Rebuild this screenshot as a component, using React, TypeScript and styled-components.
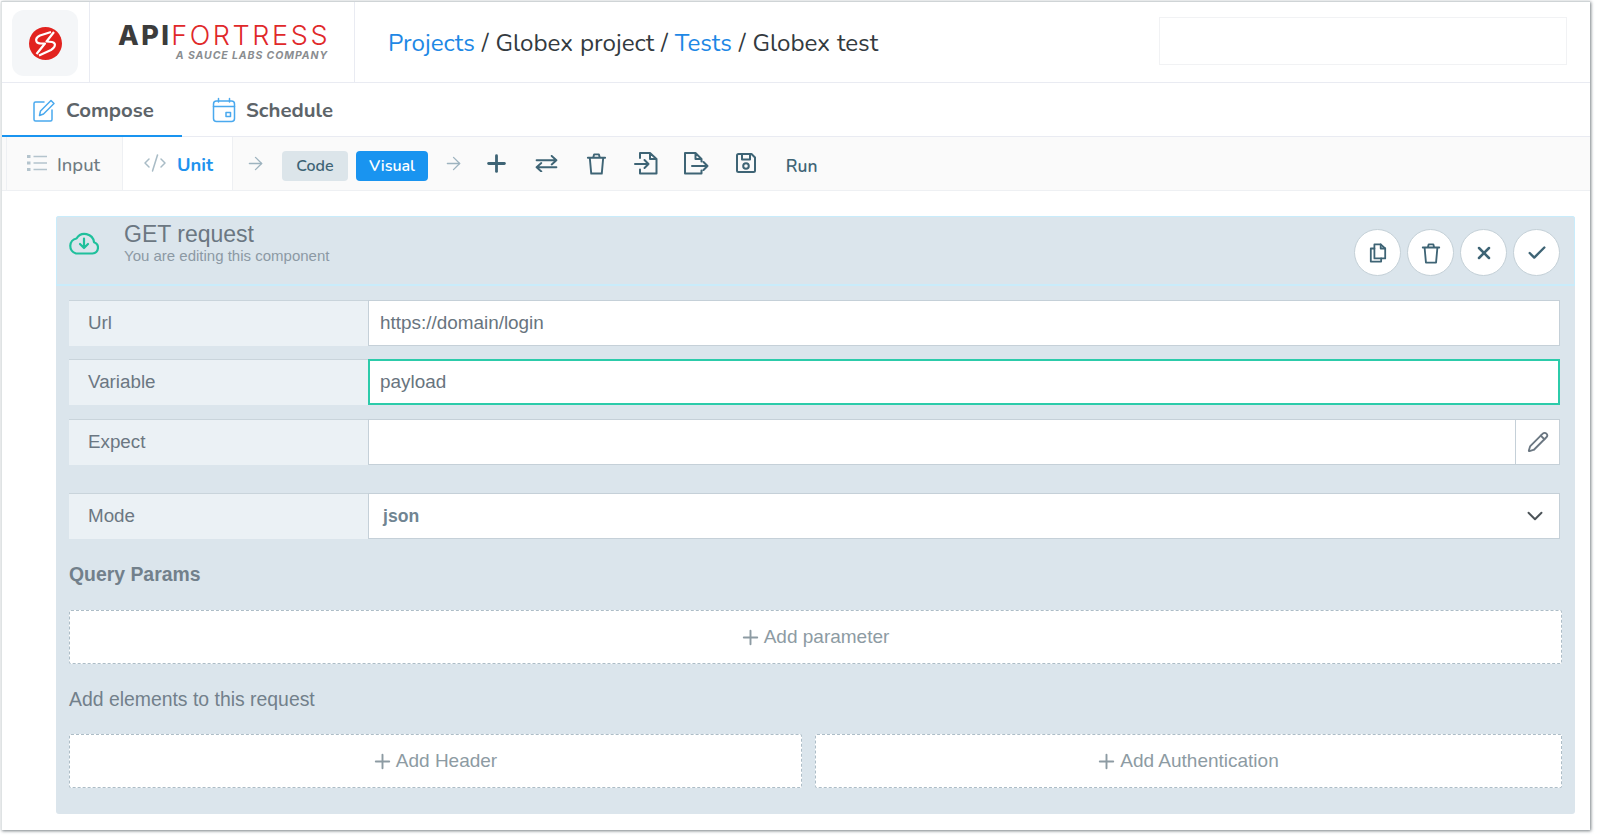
import { ReactNode } from "react";
import styled, { createGlobalStyle } from "styled-components";
import { ArrowRight, Check, ChevronDown, CodeXml, Pencil, Plus, X } from "lucide-react";

const GlobalStyle = createGlobalStyle`
  html, body {
    margin: 0;
    padding: 0;
    min-height: 100vh;
    background: #fff;
  }
  * {
    box-sizing: border-box;
  }
`;

const uiFont = `"Nunito", "Lato", "Open Sans", sans-serif`;
const formFont = `"Liberation Sans", Arial, sans-serif`;

const Page = styled.div`
  width: 1598px;
  height: 838px;
  padding: 1px 0 0 1px;
  overflow: hidden;
`;

const Frame = styled.div`
  width: 1589px;
  height: 829px;
  background: #fff;
  border-top: 1px solid #cfd4d6;
  border-left: 1px solid #dfe3e4;
  box-shadow: 1px 1px 3px rgba(95, 105, 110, 0.85);
  font-family: ${uiFont};
  overflow: hidden;
`;

const Header = styled.header`
  display: flex;
  align-items: stretch;
  height: 81px;
  border-bottom: 1px solid #e9ebf2;
`;

const IconCell = styled.div`
  width: 88px;
  padding: 8px 0 0 10px;
  border-right: 1px solid #e9ebf2;
`;

const IconTile = styled.div`
  display: flex;
  align-items: center;
  justify-content: center;
  width: 66px;
  height: 66px;
  border-radius: 12px;
  background: #f4f6f8;
`;

const LogoCell = styled.div`
  display: flex;
  flex-direction: column;
  width: 265px;
  padding: 20px 0 0 28px;
  border-right: 1px solid #e9ebf2;
`;

const LogoWord = styled.div`
  font-family: "Inter", sans-serif;
  font-size: 27px;
  line-height: 27px;
  white-space: nowrap;
`;

const LogoStrong = styled.span`
  font-weight: 800;
  letter-spacing: 2.4px;
  color: #3c3c3c;
`;

const LogoLight = styled.span`
  font-weight: 300;
  letter-spacing: 2.6px;
  color: #e0282a;
`;

const LogoSub = styled.div`
  font-family: "Inter", sans-serif;
  font-size: 10.5px;
  line-height: 12px;
  margin-top: 1px;
  width: 210px;
  text-align: right;
  font-weight: 700;
  font-style: italic;
  letter-spacing: 0.9px;
  color: #8a8d90;
  white-space: nowrap;
`;

const Breadcrumb = styled.nav`
  display: flex;
  align-items: center;
  flex: 1;
  padding: 2px 0 0 33px;
  font-size: 24.2px;
  word-spacing: 0.6px;
  color: #333a40;
  white-space: pre;
`;

const Crumb = styled.span`
  color: #1e88e5;
`;

const SearchBox = styled.div`
  align-self: flex-start;
  width: 408px;
  height: 48px;
  margin: 15px 23px 0 0;
  border: 1px solid #f1f2f4;
`;

const Tabs = styled.div`
  display: flex;
  height: 54px;
  border-bottom: 1px solid #e9ebf2;
`;

const Tab = styled.div<{ $active?: boolean; $width: number }>`
  display: flex;
  align-items: center;
  gap: 9px;
  width: ${(p) => p.$width}px;
  padding: 1px 0 0 29px;
  margin-bottom: -1px;
  border-bottom: 2px solid ${(p) => (p.$active ? "#1994f0" : "transparent")};
  font-size: 20.4px;
  font-weight: 700;
  color: #5d6469;
`;

const TabIcon = styled.svg`
  width: 26px;
  height: 26px;
  fill: none;
  stroke: #4aa9ee;
  stroke-width: 1.5;
  stroke-linecap: round;
  stroke-linejoin: round;
  flex-shrink: 0;
`;

const Toolbar = styled.div`
  display: flex;
  align-items: center;
  height: 54px;
  padding-left: 4px;
  background: #fafafa;
  border-bottom: 1px solid #eef0f3;
`;

const SideTab = styled.div<{ $active?: boolean; $width: number }>`
  display: flex;
  align-items: center;
  gap: 10px;
  height: 100%;
  width: ${(p) => p.$width}px;
  padding: 2px 0 0 20px;
  background: ${(p) => (p.$active ? "#fff" : "transparent")};
  border-left: 1px solid #eef0f3;
  border-right: ${(p) => (p.$active ? "1px solid #eef0f3" : "none")};
  font-size: 18.4px;
  font-weight: ${(p) => (p.$active ? 700 : 500)};
  color: ${(p) => (p.$active ? "#1e93ee" : "#6f7a82")};
  svg {
    color: #a9bcc6;
    margin-top: -3px;
  }
`;

const ToolArrow = styled.span<{ $gapLeft: number; $gapRight: number }>`
  display: flex;
  margin: -1px ${(p) => p.$gapRight}px 0 ${(p) => p.$gapLeft}px;
  color: #9db3bf;
`;

const ModeButton = styled.div<{ $active?: boolean; $width: number }>`
  display: flex;
  align-items: center;
  justify-content: center;
  width: ${(p) => p.$width}px;
  height: 30px;
  margin: 4px 8px 0 0;
  border-radius: 4px;
  background: ${(p) => (p.$active ? "#1994f0" : "#dce5ea")};
  color: ${(p) => (p.$active ? "#fff" : "#3e6475")};
  font-size: 16px;
  font-weight: 600;
`;

const ToolIcons = styled.div`
  display: flex;
  align-items: center;
  color: #3e6475;
  margin-top: -1px;
`;

const ToolIcon = styled.span`
  display: flex;
  align-items: center;
  justify-content: center;
  width: 49.8px;
`;

const RunLabel = styled.span`
  margin: 4px 0 0 15px;
  font-size: 17.4px;
  font-weight: 600;
  color: #3e6475;
`;

const Glyph = styled.svg`
  fill: none;
  stroke: currentColor;
  stroke-width: 2;
  stroke-linecap: round;
  stroke-linejoin: round;
`;

const Panel = styled.section`
  width: 1519px;
  height: 598px;
  margin: 25px 0 0 54px;
  background: #dbe5ec;
  border-radius: 3px;
`;

const PanelHead = styled.div`
  display: flex;
  align-items: flex-start;
  height: 70px;
  border: 1px solid #c9ecfb;
  border-bottom-width: 2px;
  border-radius: 3px 3px 0 0;
`;

const CloudSlot = styled.div`
  display: flex;
  width: 67px;
  padding: 14px 0 0 11px;
  color: #1fc09c;
`;

const Titles = styled.div`
  flex: 1;
  padding-top: 4px;
  font-family: ${formFont};
`;

const Title = styled.div`
  font-size: 23px;
  line-height: 26px;
  color: #6b7782;
`;

const Subtitle = styled.div`
  font-size: 15px;
  line-height: 17px;
  color: #8c99a4;
`;

const HeadActions = styled.div`
  display: flex;
  gap: 6px;
  padding: 12px 14px 0 0;
`;

const RoundButton = styled.button`
  display: flex;
  align-items: center;
  justify-content: center;
  width: 47px;
  height: 47px;
  padding: 0;
  border-radius: 50%;
  border: 1.5px solid #c4d0d7;
  background: #fff;
  color: #3e6475;
`;

const PanelBody = styled.div`
  display: flex;
  flex-direction: column;
  padding: 14px 0 0 13px;
  font-family: ${formFont};
`;

const FieldRow = styled.div<{ $gap: number }>`
  display: flex;
  width: 1491px;
  height: 46px;
  margin-bottom: ${(p) => p.$gap}px;
`;

const FieldLabel = styled.div`
  display: flex;
  align-items: center;
  width: 299px;
  padding: 0 0 2px 19px;
  background: #ebf1f5;
  border-top: 1px solid #c9d4db;
  font-size: 18.8px;
  color: #6b7782;
`;

const FieldValue = styled.div<{ $focus?: boolean }>`
  display: flex;
  align-items: center;
  flex: 1;
  padding-left: ${(p) => (p.$focus ? 10 : 11)}px;
  background: #fff;
  border: ${(p) => (p.$focus ? "2px solid #2ccbaa" : "1px solid #c5d0d8")};
  font-size: 18.9px;
  color: #68747e;
`;

const EditSlot = styled.div`
  display: flex;
  align-items: center;
  justify-content: center;
  width: 44px;
  background: #fff;
  border: 1px solid #c5d0d8;
  border-left: none;
  color: #6b7782;
`;

const SelectValue = styled.div`
  display: flex;
  align-items: center;
  justify-content: space-between;
  flex: 1;
  padding: 0 11px 0 14px;
  background: #fff;
  border: 1px solid #c5d0d8;
  font-size: 17.6px;
  font-weight: 700;
  color: #718592;
  svg {
    color: #4c5358;
  }
`;

const SectionTitle = styled.div<{ $bold?: boolean; $top: number; $bottom: number }>`
  margin: ${(p) => p.$top}px 0 ${(p) => p.$bottom}px;
  font-size: 19.4px;
  line-height: 22px;
  font-weight: ${(p) => (p.$bold ? 700 : 400)};
  color: #72808b;
`;

const DashedButton = styled.div<{ $width?: number }>`
  display: flex;
  align-items: center;
  justify-content: center;
  gap: 2px;
  flex: ${(p) => (p.$width ? `0 0 ${p.$width}px` : "1")};
  height: 54px;
  padding-right: 3px;
  background: #fff;
  border: 1px dashed #adbdc7;
  border-radius: 2px;
  font-size: 19px;
  color: #8d9ba3;
`;

const DashedRow = styled.div`
  display: flex;
  gap: 13px;
  width: 1493px;
`;

const ComposeIcon = () => (
  <TabIcon viewBox="0 0 26 26">
    <path d="M13 5H4.500A1.500 1.500 0 0 0 3 6.500V22.500A1.500 1.500 0 0 0 4.500 24H19.500A1.500 1.500 0 0 0 21 22.500V13" />
    <path d="M8.500 18.500L9.500 14L20 3.500L23 6.500L12.500 17Z" />
  </TabIcon>
);

const ScheduleIcon = () => (
  <TabIcon viewBox="0 0 26 26">
    <rect x="2.500" y="4" width="21" height="20.500" rx="3" />
    <path d="M2.500 9.500H23.500M7.500 1.500V5M18.500 1.500V5" />
    <rect x="15" y="15.500" width="4.500" height="4" />
  </TabIcon>
);

const ListIcon = () => (
  <svg width="20" height="18" viewBox="0 0 20 18" fill="none">
    <rect y="1" width="3.500" height="3" fill="#b4c4cd" />
    <rect y="7.500" width="3.500" height="3" fill="#b4c4cd" />
    <rect y="14" width="3.500" height="3" fill="#b4c4cd" />
    <path d="M6.500 2.500H20M6.500 9H20M6.500 15.500H20" stroke="#b4c4cd" strokeWidth="1.500" />
  </svg>
);

const CloudDown = () => (
  <svg width="32" height="24" viewBox="0 0 32 24" fill="none" stroke="currentColor" strokeWidth="2.200" strokeLinecap="round" strokeLinejoin="round">
    <path d="M8 22.500H24.500A5.800 5.800 0 0 0 26 11.200A9.500 9.500 0 0 0 8.500 7.500A7.700 7.700 0 0 0 8 22.500Z" />
    <path d="M16 7.500V16.500M12 13L16 17L20 13" />
  </svg>
);

const BoltMark = () => (
  <svg width="33" height="33" viewBox="0 0 33 33">
    <circle cx="16.500" cy="16.500" r="16.500" fill="#e2231f" />
    <path
      d="M22 5L11 8.500Q6 11 7.500 14.500Q8.500 16.500 12 16.500L16 16.500L7.500 27"
      fill="none"
      stroke="#fff"
      strokeWidth="2.200"
      strokeLinejoin="round"
    />
    <path
      d="M25 5L17.500 14.500L23 15Q27 16 25.500 19.500Q24.500 21.500 22 23L10 28.500"
      fill="none"
      stroke="#fff"
      strokeWidth="2.200"
      strokeLinejoin="round"
    />
  </svg>
);

const TrashIcon = ({ size }: { size: number }) => (
  <Glyph width={size} height={size} viewBox="0 0 24 24">
    <path d="M3 6H21M8.500 6L9.500 2.500H14.500L15.500 6M5 6L6.500 22.500H17.500L19 6" />
  </Glyph>
);

const SwapIcon = () => (
  <Glyph width="23" height="17" viewBox="0 0 24 18">
    <path d="M1.500 5.500H22.500M17.500 1L22.500 5.500L17.500 10M22.500 13H1.500M6.500 8.500L1.500 13L6.500 17.500" />
  </Glyph>
);

const FileInIcon = () => (
  <Glyph width="24" height="24" viewBox="0 0 24 24">
    <path d="M6 7V2H16L22.500 8V22.500H6V18.500M16 2V8H22.500M1 13H14.500M10.500 9L14.500 13L10.500 17" />
  </Glyph>
);

const FileOutIcon = () => (
  <Glyph width="26" height="24" viewBox="0 0 26 24">
    <path d="M2 22.500V2H12.500L18.500 8V10.500M12.500 2V8H18.500M18.500 19.500V22.500H2M9 15H24.500M20.500 11L24.500 15L20.500 19" />
  </Glyph>
);

const SaveIcon = () => (
  <Glyph width="22" height="22" viewBox="0 0 22 22">
    <path d="M3.500 2H16.500L20 5.500V18.500A1.500 1.500 0 0 1 18.500 20H3.500A1.500 1.500 0 0 1 2 18.500V3.500A1.500 1.500 0 0 1 3.500 2Z" />
    <path d="M7 2V7.500H15V2" />
    <circle cx="11" cy="14" r="2.800" />
  </Glyph>
);

const CopyIcon = () => (
  <Glyph width="18" height="20" viewBox="0 0 20 22">
    <path d="M6 17H18V6L13 1.500H6Z" />
    <path d="M13 1.500V6H18" />
    <path d="M6 6H2V20.500H13.500V17" />
  </Glyph>
);

const AddButton = ({ children, width }: { children: ReactNode; width?: number }) => (
  <DashedButton $width={width}>
    <Plus size={23} strokeWidth={2} />
    {children}
  </DashedButton>
);

const App = () => (
  <Page>
    <GlobalStyle />
    <Frame>
      <Header>
        <IconCell>
          <IconTile>
            <BoltMark />
          </IconTile>
        </IconCell>
        <LogoCell>
          <LogoWord>
            <LogoStrong>API</LogoStrong>
            <LogoLight>FORTRESS</LogoLight>
          </LogoWord>
          <LogoSub>A SAUCE LABS COMPANY</LogoSub>
        </LogoCell>
        <Breadcrumb>
          <Crumb>Projects</Crumb> / Globex project / <Crumb>Tests</Crumb> / Globex test
        </Breadcrumb>
        <SearchBox />
      </Header>
      <Tabs>
        <Tab $active $width={180}>
          <ComposeIcon />
          Compose
        </Tab>
        <Tab $width={200}>
          <ScheduleIcon />
          Schedule
        </Tab>
      </Tabs>
      <Toolbar>
        <SideTab $width={116}>
          <ListIcon />
          Input
        </SideTab>
        <SideTab $active $width={111}>
          <CodeXml size={24} strokeWidth={1.500} />
          Unit
        </SideTab>
        <ToolArrow $gapLeft={12} $gapRight={16}>
          <ArrowRight size={21} strokeWidth={1.500} />
        </ToolArrow>
        <ModeButton $width={66}>Code</ModeButton>
        <ModeButton $active $width={72}>
          Visual
        </ModeButton>
        <ToolArrow $gapLeft={7} $gapRight={8}>
          <ArrowRight size={21} strokeWidth={1.500} />
        </ToolArrow>
        <ToolIcons>
          <ToolIcon>
            <Plus size={27} strokeWidth={2.500} />
          </ToolIcon>
          <ToolIcon>
            <SwapIcon />
          </ToolIcon>
          <ToolIcon>
            <TrashIcon size={23} />
          </ToolIcon>
          <ToolIcon>
            <FileInIcon />
          </ToolIcon>
          <ToolIcon>
            <FileOutIcon />
          </ToolIcon>
          <ToolIcon>
            <SaveIcon />
          </ToolIcon>
        </ToolIcons>
        <RunLabel>Run</RunLabel>
      </Toolbar>
      <Panel>
        <PanelHead>
          <CloudSlot>
            <CloudDown />
          </CloudSlot>
          <Titles>
            <Title>GET request</Title>
            <Subtitle>You are editing this component</Subtitle>
          </Titles>
          <HeadActions>
            <RoundButton>
              <CopyIcon />
            </RoundButton>
            <RoundButton>
              <TrashIcon size={22} />
            </RoundButton>
            <RoundButton>
              <X size={20} strokeWidth={3} />
            </RoundButton>
            <RoundButton>
              <Check size={22} strokeWidth={2.600} />
            </RoundButton>
          </HeadActions>
        </PanelHead>
        <PanelBody>
          <FieldRow $gap={13}>
            <FieldLabel>Url</FieldLabel>
            <FieldValue>https://domain/login</FieldValue>
          </FieldRow>
          <FieldRow $gap={14}>
            <FieldLabel>Variable</FieldLabel>
            <FieldValue $focus>payload</FieldValue>
          </FieldRow>
          <FieldRow $gap={28}>
            <FieldLabel>Expect</FieldLabel>
            <FieldValue />
            <EditSlot>
              <Pencil size={22} strokeWidth={2} />
            </EditSlot>
          </FieldRow>
          <FieldRow $gap={0}>
            <FieldLabel>Mode</FieldLabel>
            <SelectValue>
              json
              <ChevronDown size={26} strokeWidth={1.800} />
            </SelectValue>
          </FieldRow>
          <SectionTitle $bold $top={24} $bottom={25}>
            Query Params
          </SectionTitle>
          <DashedRow>
            <AddButton>Add parameter</AddButton>
          </DashedRow>
          <SectionTitle $top={24} $bottom={24}>
            Add elements to this request
          </SectionTitle>
          <DashedRow>
            <AddButton width={733}>Add Header</AddButton>
            <AddButton>Add Authentication</AddButton>
          </DashedRow>
        </PanelBody>
      </Panel>
    </Frame>
  </Page>
);

export default App;
